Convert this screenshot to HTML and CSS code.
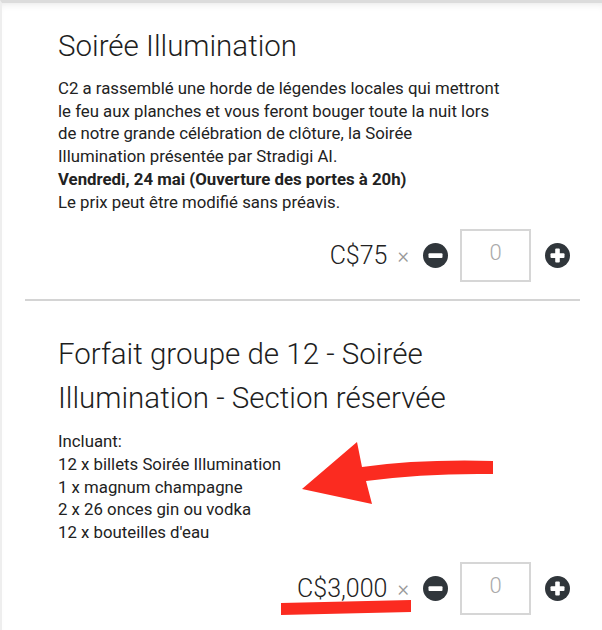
FILE: index.html
```html
<!DOCTYPE html>
<html lang="fr">
<head>
    <meta charset="UTF-8">
    <meta name="viewport" content="width=device-width, initial-scale=1.0">
    <title>Billets - Soirée Illumination</title>
    <link rel="stylesheet" href="styles.css">
</head>
<body>
    <div class="page">
        <div class="tickets">
            <div class="ticket">
                <h2 class="ticket-title">Soirée Illumination</h2>
                <p class="ticket-desc">
                    C2 a rassemblé une horde de légendes locales qui mettront<br>
                    le feu aux planches et vous feront bouger toute la nuit lors<br>
                    de notre grande célébration de clôture, la Soirée<br>
                    Illumination présentée par Stradigi AI.<br>
                    <strong>Vendredi, 24 mai (Ouverture des portes à 20h)</strong><br>
                    Le prix peut être modifié sans préavis.
                </p>
                <div class="price-row">
                    <span class="price">C$75</span>
                    <span class="times">&times;</span>
                    <button class="qty-btn" aria-label="Retirer">
                        <svg width="25" height="25" viewBox="0 0 25 25"><circle cx="12.5" cy="12.5" r="12.5" fill="#30363b"/><rect x="5.5" y="10.3" width="14" height="4.6" rx="1" fill="#fff"/></svg>
                    </button>
                    <input class="qty" type="text" value="0">
                    <button class="qty-btn" aria-label="Ajouter">
                        <svg width="25" height="25" viewBox="0 0 25 25"><circle cx="12.5" cy="12.5" r="12.5" fill="#30363b"/><rect x="5.5" y="10.3" width="14" height="4.6" rx="1" fill="#fff"/><rect x="10.2" y="5.5" width="4.6" height="14" rx="1" fill="#fff"/></svg>
                    </button>
                </div>
            </div>

            <div class="ticket">
                <h2 class="ticket-title">Forfait groupe de 12 - Soirée<br>Illumination - Section réservée</h2>
                <p class="ticket-desc">
                    Incluant:<br>
                    12 x billets Soirée Illumination<br>
                    1 x magnum champagne<br>
                    2 x 26 onces gin ou vodka<br>
                    12 x bouteilles d'eau
                </p>
                <div class="price-row">
                    <span class="price">C$3,000</span>
                    <span class="times">&times;</span>
                    <button class="qty-btn" aria-label="Retirer">
                        <svg width="25" height="25" viewBox="0 0 25 25"><circle cx="12.5" cy="12.5" r="12.5" fill="#30363b"/><rect x="5.5" y="10.3" width="14" height="4.6" rx="1" fill="#fff"/></svg>
                    </button>
                    <input class="qty" type="text" value="0">
                    <button class="qty-btn" aria-label="Ajouter">
                        <svg width="25" height="25" viewBox="0 0 25 25"><circle cx="12.5" cy="12.5" r="12.5" fill="#30363b"/><rect x="5.5" y="10.3" width="14" height="4.6" rx="1" fill="#fff"/><rect x="10.2" y="5.5" width="4.6" height="14" rx="1" fill="#fff"/></svg>
                    </button>
                </div>
            </div>
        </div>

        <!-- red markup drawn over the screenshot -->
        <svg class="markup" width="602" height="630" viewBox="0 0 602 630">
            <path d="M302 489 L357 442 L362 467 Q420 459 493 461 L493 474 Q425 473 366 481 L372 504 Z" fill="#fb2b20"/>
            <path d="M281 603 L411 600 L411 612 L281 615 Z" fill="#fb2b20"/>
        </svg>
    </div>
</body>
</html>
```

FILE: styles.css
```css
body {
    margin: 0;
    padding: 0;
    background: #fff;
    font-family: 'Roboto', 'Liberation Sans', sans-serif;
    color: #222;
}
.page {
    position: relative;
    min-height: 630px;
    border-top: 3px solid #dcdcdc;
    border-left: 2px solid #eee;
    box-shadow: inset 0 6px 8px -6px rgba(0, 0, 0, 0.12);
    box-sizing: border-box;
}
.tickets {
    margin-left: 23px;
    width: 555px;
}
.ticket {
    padding: 21px 10px 0 33px;
}
.ticket + .ticket {
    border-top: 2px solid #d4d4d4;
    padding-top: 31px;
}
.ticket-title {
    margin: 0;
    font-size: 29.5px;
    font-weight: 300;
    line-height: 44px;
    color: #1e1e1e;
}
.ticket-desc {
    margin: 9px 0 0;
    font-size: 16.8px;
    line-height: 22.7px;
    font-weight: 400;
    color: #222;
}
.ticket + .ticket .ticket-desc {
    margin-top: 10px;
}
.ticket-desc strong {
    font-weight: 700;
}
.price-row {
    display: flex;
    justify-content: flex-end;
    align-items: center;
    margin-top: 16px;
    margin-bottom: 17px;
}
.ticket + .ticket .price-row {
    margin-top: 18px;
}
.price {
    font-size: 25px;
    font-weight: 300;
    color: #222;
}
.times {
    margin-left: 10px;
    font-size: 22px;
    font-weight: 300;
    color: #999;
}
.qty-btn {
    display: flex;
    padding: 0;
    border: none;
    background: none;
    cursor: pointer;
}
.times + .qty-btn {
    margin-left: 14px;
}
.qty {
    width: 71px;
    height: 53px;
    margin: 0 14px 0 12px;
    padding: 0 0 6px;
    box-sizing: border-box;
    border: 2px solid #d6d6d6;
    font-family: 'Roboto', sans-serif;
    font-size: 22px;
    font-weight: 300;
    color: #aaa;
    text-align: center;
}
.markup {
    position: absolute;
    top: -3px;
    left: -2px;
    pointer-events: none;
}
```
